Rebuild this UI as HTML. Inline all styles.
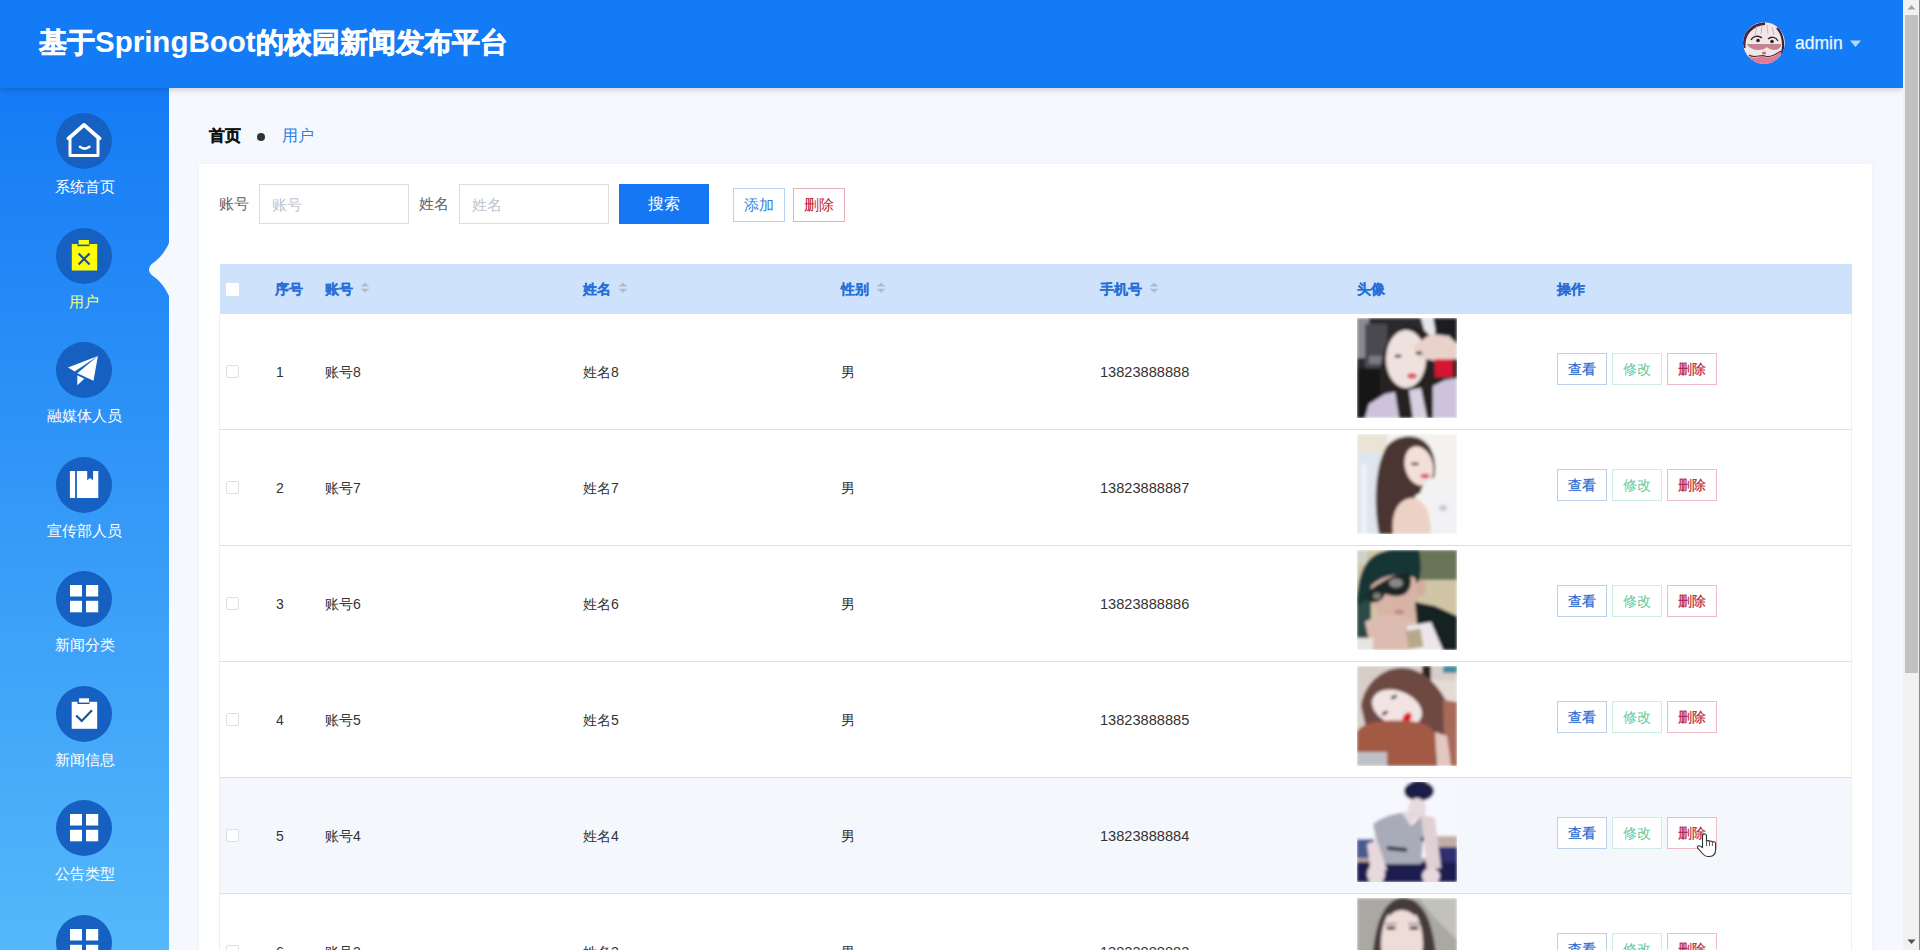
<!DOCTYPE html>
<html><head><meta charset="utf-8">
<style>
*{box-sizing:border-box;margin:0;padding:0}
html,body{width:1920px;height:950px;overflow:hidden;background:#f5f8fd;font-family:"Liberation Sans",sans-serif}
.abs{position:absolute}
#hdr{left:0;top:0;width:1903px;height:88px;background:#137bf5;box-shadow:0 2px 6px rgba(0,0,0,.16);z-index:5}
#title{left:39px;top:22px;color:#fff;font-size:28px;font-weight:bold;white-space:nowrap;line-height:40px}
#title .en{font-size:29.5px}
#title .cj{-webkit-text-stroke:0.6px #fff}
#avatar{left:1743px;top:22px;width:42px;height:42px;border-radius:50%;overflow:hidden}
#uname{left:1795px;top:32px;color:#eaf5ff;font-size:17.5px;line-height:22px;-webkit-text-stroke:0.25px #eaf5ff}
#caret{left:1850px;top:40px}
#side{left:0;top:88px;width:169px;height:862px;background:linear-gradient(#157bf5,#54b8fa);z-index:2}
.mi{position:absolute;left:0;width:169px;height:115px}
.mi .c{position:absolute;left:56px;top:0;width:56px;height:56px;border-radius:50%;background:#1560c1}
.mi .c svg{position:absolute;left:0;top:0}
.mi .l{position:absolute;left:0;top:65px;width:169px;text-align:center;color:#fff;font-size:15px;line-height:18px;white-space:nowrap}
.mi.act .l{color:#eeff80;left:-1px}
#notch{left:149px;top:243px;z-index:3}
#sb{left:1903px;top:0;width:17px;height:950px;background:#f1f1f1;z-index:6}
#sb .th{position:absolute;left:2px;top:15px;width:13px;height:658px;background:#c1c1c1}
#sb .edge{position:absolute;right:0;top:0;width:1px;height:950px;background:#8a8a8a}
#bc{left:209px;top:126px;font-size:16px;line-height:20px;white-space:nowrap}
#bc .h{color:#111;font-weight:bold;-webkit-text-stroke:0.3px #111}
#bc .dot{position:absolute;left:48px;top:7px;width:8px;height:8px;border-radius:50%;background:#333}
#bc .u{position:absolute;left:73px;top:0;color:#2f7fe6;font-size:15.5px}
#card{left:199px;top:164px;width:1673px;height:800px;background:#fff;box-shadow:0 0 4px rgba(220,228,240,.35)}
.lab{position:absolute;top:195px;font-size:15px;color:#606266;line-height:18px}
.inp{position:absolute;top:184px;width:150px;height:40px;border:1px solid #dddddd;background:#fff}
.inp span{position:absolute;left:12px;top:11px;font-size:15px;color:#c0c4cc;line-height:18px}
#sbtn{left:619px;top:184px;width:90px;height:40px;background:#1677f4;color:#fff;font-size:16px;line-height:40px;text-align:center}
.obtn{position:absolute;top:188px;width:52px;height:34px;border:1px solid #b3d3f5;background:#fff;font-size:15px;line-height:32px;text-align:center}
#tbl{left:220px;top:264px;width:1632px;height:700px}
#thead{left:0;top:0;width:1632px;height:50px;background:#cee3fb}
#thead .th{position:absolute;top:16px;font-size:14px;font-weight:bold;color:#2a71d8;line-height:18px;white-space:nowrap}
#thead .th .cj{-webkit-text-stroke:0.2px #2a6fd6}
.srt{position:absolute;top:2px}
.hcb{position:absolute;left:6px;top:19px;width:13px;height:13px;background:#fff;border-radius:1px}
#tl{left:219px;top:314px;width:1px;height:640px;background:#eceef2}
#tr{left:1851px;top:314px;width:1px;height:640px;background:#eef0f4;z-index:1}
.row{position:absolute;left:220px;width:1632px;height:116px;border-bottom:1px solid #d5e0ec;background:#fff}
.row.hov{background:#f4f7fc}
.row .cb{position:absolute;left:6px;top:51px;width:13px;height:13px;border:1px solid #dcdfe6;background:#fff;border-radius:2px}
.row .t{position:absolute;top:49px;font-size:14px;color:#333;line-height:18px;white-space:nowrap}
.row .ph{position:absolute;left:1137px;top:4px;width:100px;height:100px;overflow:hidden}
.btn{position:absolute;top:39px;width:50px;height:32px;border:1px solid;background:#fff;font-size:14px;line-height:30px;text-align:center}
.b1{left:1337px;color:#2468d0;border-color:#bcd0ec;-webkit-text-stroke:0.2px #2468d0}
.b2{left:1392px;color:#62c89a;border-color:#cbeedf}
.b3{left:1447px;color:#b81c3a;border-color:#ebbcc4;-webkit-text-stroke:0.2px #b81c3a}
.hov .btn{background:#fff}
#cursor{left:1696px;top:833px;z-index:8}
</style></head><body>
<div id="hdr" class="abs">
  <div id="title" class="abs"><span class="cj">基于</span><span class="en">SpringBoot</span><span class="cj">的校园新闻发布平台</span></div>
  <div id="avatar" class="abs"><svg width="42" height="42" viewBox="0 0 42 42"><defs><clipPath id="av"><circle cx="21" cy="21" r="21"/></clipPath><filter id="avb"><feGaussianBlur stdDeviation="0.5"/></filter></defs><g clip-path="url(#av)"><rect width="42" height="42" fill="#f3e6e8"/><g filter="url(#avb)">
<path d="M1,26 C0,12 8,3 22,1.5" fill="none" stroke="#4a2838" stroke-width="3"/>
<path d="M34,6 C40,12 42,24 38,34" fill="none" stroke="#3a2432" stroke-width="2.2"/>
<path d="M14,4 L12,14 M19,3 L18,12 M24,3 L25,12 M29,5 L31,13" stroke="#c9b6c0" stroke-width="1"/>
<path d="M8,18 C10,14 16,13 19,16 M25,17 C28,14 33,15 35,19" fill="none" stroke="#3a2a30" stroke-width="1.3"/>
<circle cx="15" cy="18.5" r="1.8" fill="#2a2028"/><circle cx="29" cy="19.5" r="1.8" fill="#2a2028"/>
<path d="M4,22 H38 V24 C36,29 28,29 24,25 C20,29 10,29 5,24 Z" fill="#c48590"/>
<path d="M6,34 C12,38 18,33 22,35 C26,37 32,34 38,30 L40,42 H4 Z" fill="#e07a98"/>
<path d="M6,33 C12,37 18,32 22,34 C26,36 32,33 38,29" fill="none" stroke="#4a2838" stroke-width="1.2"/>
<ellipse cx="21" cy="31" rx="2.2" ry="1.5" fill="#d06a84"/>
</g></g></svg></div>
  <div id="uname" class="abs">admin</div>
  <svg id="caret" class="abs" width="11" height="8" viewBox="0 0 11 8"><path d="M0,0.5 H11 L5.5,7 Z" fill="#b6d6fc"/></svg>
</div>
<div id="side" class="abs">
<div class="mi" style="top:25px"><div class="c"><svg width="56" height="56" viewBox="0 0 56 56"><path d="M14,42.5 V25 L28,12.5 L42,25 V42.5 Z" fill="none" stroke="#fff" stroke-width="3" stroke-linejoin="round"/><path d="M12,25.5 L28,11.5 L44,25.5" fill="none" stroke="#fff" stroke-width="3" stroke-linecap="round" stroke-linejoin="round"/><path d="M24,33.8 Q28.7,37.5 33.4,33.8" fill="none" stroke="#fff" stroke-width="2.6" stroke-linecap="round"/></svg></div><div class="l">系统首页</div></div>
<div class="mi act" style="top:140px"><div class="c"><svg width="56" height="56" viewBox="0 0 56 56"><rect x="15.8" y="16" width="25.4" height="26.5" fill="#ffff00"/><rect x="21.5" y="16" width="12" height="2.2" fill="#1a55a8"/><rect x="22.7" y="12" width="10.3" height="4.6" fill="#ffff00"/><path d="M22.6,25.4 L33.6,36.4 M33.6,25.4 L22.6,36.4" stroke="#1d4f97" stroke-width="2.1"/></svg></div><div class="l">用户</div></div>
<div class="mi" style="top:254px"><div class="c"><svg width="56" height="56" viewBox="0 0 56 56"><path d="M12,25.4 L41.9,14 L18.7,29.6 Z" fill="#fff"/><path d="M21.3,31.2 L41.9,14 L37.5,38.7 Z" fill="#fff"/><path d="M21.3,33.2 L28.3,36.8 L21.3,43.2 Z" fill="#fff"/></svg></div><div class="l">融媒体人员</div></div>
<div class="mi" style="top:369px"><div class="c"><svg width="56" height="56" viewBox="0 0 56 56"><rect x="13.9" y="14" width="5.2" height="27" fill="#fff"/><path d="M20.9,14 H31.2 V23.2 L34.1,21 L37.1,23.2 V14 H42.3 V41 H20.9 Z" fill="#fff"/></svg></div><div class="l">宣传部人员</div></div>
<div class="mi" style="top:483px"><div class="c"><svg width="56" height="56" viewBox="0 0 56 56"><rect x="14" y="14" width="12" height="11.5" fill="#fff"/><rect x="30" y="14" width="12.2" height="11.5" fill="#fff"/><rect x="14" y="29.8" width="12" height="11.5" fill="#fff"/><rect x="30" y="29.8" width="12.2" height="11.5" fill="#fff"/></svg></div><div class="l">新闻分类</div></div>
<div class="mi" style="top:598px"><div class="c"><svg width="56" height="56" viewBox="0 0 56 56"><rect x="15.7" y="15.8" width="25.5" height="27" fill="#fff"/><rect x="21.5" y="15.8" width="12" height="2.2" fill="#1a55a8"/><rect x="23.1" y="12.3" width="9.9" height="4.3" fill="#fff"/><path d="M20.2,29.5 L25.7,35 L36,24.3" fill="none" stroke="#1d4f97" stroke-width="2.1"/></svg></div><div class="l">新闻信息</div></div>
<div class="mi" style="top:712px"><div class="c"><svg width="56" height="56" viewBox="0 0 56 56"><rect x="14" y="14" width="12" height="11.5" fill="#fff"/><rect x="30" y="14" width="12.2" height="11.5" fill="#fff"/><rect x="14" y="29.8" width="12" height="11.5" fill="#fff"/><rect x="30" y="29.8" width="12.2" height="11.5" fill="#fff"/></svg></div><div class="l">公告类型</div></div>
<div class="mi" style="top:827px"><div class="c"><svg width="56" height="56" viewBox="0 0 56 56"><rect x="14" y="14" width="12" height="11.5" fill="#fff"/><rect x="30" y="14" width="12.2" height="11.5" fill="#fff"/><rect x="14" y="29.8" width="12" height="11.5" fill="#fff"/><rect x="30" y="29.8" width="12.2" height="11.5" fill="#fff"/></svg></div><div class="l">新闻</div></div>
</div>
<svg id="notch" class="abs" width="20" height="53" viewBox="0 0 20 53"><path d="M20,0 C16,9 10,16 4,20 Q0,23 0,26.5 Q0,30 4,33 C10,37 16,44 20,53 Z" fill="#f5f8fd"/></svg>
<div id="bc" class="abs"><span class="h">首页</span><span class="dot"></span><span class="u">用户</span></div>
<div id="card" class="abs"></div>
<div class="lab" style="left:219px">账号</div>
<div class="inp" style="left:259px"><span>账号</span></div>
<div class="lab" style="left:419px">姓名</div>
<div class="inp" style="left:459px"><span>姓名</span></div>
<div id="sbtn" class="abs">搜索</div>
<div class="obtn" style="left:733px;color:#2f7fd8;border-color:#b5d3f3">添加</div>
<div class="obtn" style="left:793px;color:#c0202c;border-color:#eab0b8">删除</div>
<div id="tl" class="abs"></div><div id="tr" class="abs"></div>
<div id="tbl" class="abs">
<div id="thead" class="abs">
<div class="hcb"></div>
<div class="th" style="left:55px"><span class="cj">序号</span></div>
<div class="th" style="left:105px"><span class="cj">账号</span><svg class="srt" style="left:35px" width="10" height="12" viewBox="0 0 10 12"><path d="M0.5,4.5 L5,0.5 L9.5,4.5 Z M0.5,6.7 L9.5,6.7 L5,10.8 Z" fill="#b4bcc8"/></svg></div>
<div class="th" style="left:363px"><span class="cj">姓名</span><svg class="srt" style="left:35px" width="10" height="12" viewBox="0 0 10 12"><path d="M0.5,4.5 L5,0.5 L9.5,4.5 Z M0.5,6.7 L9.5,6.7 L5,10.8 Z" fill="#b4bcc8"/></svg></div>
<div class="th" style="left:621px"><span class="cj">性别</span><svg class="srt" style="left:35px" width="10" height="12" viewBox="0 0 10 12"><path d="M0.5,4.5 L5,0.5 L9.5,4.5 Z M0.5,6.7 L9.5,6.7 L5,10.8 Z" fill="#b4bcc8"/></svg></div>
<div class="th" style="left:880px"><span class="cj">手机号</span><svg class="srt" style="left:49px" width="10" height="12" viewBox="0 0 10 12"><path d="M0.5,4.5 L5,0.5 L9.5,4.5 Z M0.5,6.7 L9.5,6.7 L5,10.8 Z" fill="#b4bcc8"/></svg></div>
<div class="th" style="left:1137px"><span class="cj">头像</span></div>
<div class="th" style="left:1337px"><span class="cj">操作</span></div>
</div>
</div>
<div class="abs" style="left:0;top:0"><div class="row" style="top:314px">
<div class="cb"></div>
<div class="t" style="left:56px">1</div>
<div class="t" style="left:105px">账号8</div>
<div class="t" style="left:363px">姓名8</div>
<div class="t" style="left:621px">男</div>
<div class="t" style="left:880px;font-size:14.6px">13823888888</div>
<div class="ph"><svg width="100" height="100" viewBox="0 0 100 100"><defs><filter id="bl1" x="-10%" y="-10%" width="120%" height="120%"><feGaussianBlur stdDeviation="1.6"/></filter></defs><g filter="url(#bl1)"><rect width="100" height="100" fill="#2a2a2e"/>
<rect x="0" y="0" width="12" height="40" fill="#8a8a92"/>
<rect x="8" y="6" width="22" height="45" fill="#4a4a50"/>
<rect x="12" y="38" width="16" height="8" fill="#7a7a84"/>
<rect x="0" y="50" width="30" height="50" fill="#141418"/>
<path d="M64,0 H76 L80,22 L70,22 Z" fill="#e6e6ec"/>
<rect x="78" y="0" width="22" height="40" fill="#1c1c20"/>
<path d="M25,100 C20,60 22,14 48,8 C72,4 84,30 86,62 L80,100 Z" fill="#262024"/>
<ellipse cx="49" cy="41" rx="20" ry="29" fill="#efe2de"/>
<path d="M56,28 L74,16 L92,18 L100,26 V42 L86,44 L62,40 Z" fill="#e8d2ca"/>
<rect x="78" y="41" width="19" height="18" fill="#d41830"/>
<rect x="96" y="41" width="4" height="20" fill="#181818"/>
<path d="M8,100 L12,86 L28,76 L38,74 L42,100 Z" fill="#cdc4dc"/>
<path d="M76,100 L76,68 L88,62 L100,60 V100 Z" fill="#cdc4dc"/>
<path d="M52,72 L64,70 L70,100 H56 Z" fill="#d6d0e0"/>
<ellipse cx="55" cy="58" rx="5" ry="3" fill="#e05565"/>
<ellipse cx="41" cy="38" rx="3.5" ry="1.6" fill="#3a2a2a"/>
<ellipse cx="62" cy="35" rx="3.5" ry="1.6" fill="#3a2a2a"/></g></svg></div>
<div class="btn b1">查看</div><div class="btn b2">修改</div><div class="btn b3">删除</div>
</div></div><div class="abs" style="left:0;top:0"><div class="row" style="top:430px">
<div class="cb"></div>
<div class="t" style="left:56px">2</div>
<div class="t" style="left:105px">账号7</div>
<div class="t" style="left:363px">姓名7</div>
<div class="t" style="left:621px">男</div>
<div class="t" style="left:880px;font-size:14.6px">13823888887</div>
<div class="ph"><svg width="100" height="100" viewBox="0 0 100 100"><defs><filter id="bl2" x="-10%" y="-10%" width="120%" height="120%"><feGaussianBlur stdDeviation="1.6"/></filter></defs><g filter="url(#bl2)"><rect width="100" height="100" fill="#f4f2ee"/>
<rect x="0" y="0" width="30" height="20" fill="#ebe4d4"/>
<rect x="0" y="18" width="24" height="82" fill="#dfe5ee"/>
<rect x="4" y="30" width="6" height="70" fill="#eef2f8"/>
<path d="M22,100 C16,70 18,30 30,12 C40,0 62,-2 72,12 C80,24 80,42 74,52 L58,62 L52,100 Z" fill="#4c3430"/>
<ellipse cx="62" cy="32" rx="14" ry="20" fill="#f2dfd8" transform="rotate(-15 62 32)"/>
<path d="M36,100 C34,80 40,66 54,64 C68,64 74,80 74,100 Z" fill="#ecd2c4"/>
<path d="M64,56 C70,40 90,38 100,52 V100 H78 C76,80 70,66 64,62 Z" fill="#f2f2f4"/>
<ellipse cx="86" cy="74" rx="4" ry="3" fill="#c8c8cc"/>
<ellipse cx="68" cy="42" rx="4.5" ry="2.2" fill="#e04070"/>
<ellipse cx="58" cy="30" rx="4" ry="1.4" fill="#5a4040"/></g></svg></div>
<div class="btn b1">查看</div><div class="btn b2">修改</div><div class="btn b3">删除</div>
</div></div><div class="abs" style="left:0;top:0"><div class="row" style="top:546px">
<div class="cb"></div>
<div class="t" style="left:56px">3</div>
<div class="t" style="left:105px">账号6</div>
<div class="t" style="left:363px">姓名6</div>
<div class="t" style="left:621px">男</div>
<div class="t" style="left:880px;font-size:14.6px">13823888886</div>
<div class="ph"><svg width="100" height="100" viewBox="0 0 100 100"><defs><filter id="bl3" x="-10%" y="-10%" width="120%" height="120%"><feGaussianBlur stdDeviation="1.6"/></filter></defs><g filter="url(#bl3)"><rect width="100" height="100" fill="#d0c6a6"/>
<rect x="56" y="0" width="44" height="30" fill="#6a7458"/>
<rect x="0" y="0" width="10" height="14" fill="#cfd2cc"/>
<rect x="0" y="46" width="14" height="44" fill="#2c4846"/>
<path d="M0,56 C0,20 10,2 35,0 L62,0 C65,15 64,28 60,36 L40,30 C28,28 18,34 10,50 Z" fill="#183636"/>
<path d="M14,36 C26,24 46,22 58,28 C64,44 62,62 56,72 L30,74 C18,62 12,50 14,36 Z" fill="#d8b4a6"/>
<ellipse cx="64" cy="38" rx="5" ry="8" fill="#d2ae9e"/>
<path d="M10,42 C20,34 36,24 52,22 C56,30 54,40 48,44 C40,48 34,46 28,44 C26,50 20,54 12,52 Z" fill="#1c2626"/>
<ellipse cx="39" cy="33" rx="7" ry="4.5" fill="#8a8884"/>
<ellipse cx="20" cy="46" rx="4" ry="3.5" fill="#7a7a76"/>
<path d="M58,52 L78,56 L100,66 V100 H62 Z" fill="#182020"/>
<path d="M8,72 C20,64 42,62 56,70 L60,96 L40,100 H14 Z" fill="#dcbcb0"/>
<path d="M50,76 L74,72 L86,100 H52 Z" fill="#ece6ea"/>
<rect x="0" y="88" width="16" height="12" fill="#e8e4e4"/>
<rect x="50" y="80" width="15" height="18" fill="#b8a888" transform="rotate(-10 57 89)"/>
<ellipse cx="42" cy="62" rx="5" ry="2.5" fill="#c48888"/></g></svg></div>
<div class="btn b1">查看</div><div class="btn b2">修改</div><div class="btn b3">删除</div>
</div></div><div class="abs" style="left:0;top:0"><div class="row" style="top:662px">
<div class="cb"></div>
<div class="t" style="left:56px">4</div>
<div class="t" style="left:105px">账号5</div>
<div class="t" style="left:363px">姓名5</div>
<div class="t" style="left:621px">男</div>
<div class="t" style="left:880px;font-size:14.6px">13823888885</div>
<div class="ph"><svg width="100" height="100" viewBox="0 0 100 100"><defs><filter id="bl4" x="-10%" y="-10%" width="120%" height="120%"><feGaussianBlur stdDeviation="1.6"/></filter></defs><g filter="url(#bl4)"><rect width="100" height="100" fill="#d8cdc8"/>
<rect x="65" y="0" width="9" height="20" fill="#2a2020"/>
<rect x="86" y="0" width="14" height="7" fill="#3a8aa0"/>
<rect x="68" y="14" width="32" height="22" fill="#e4dad6"/>
<path d="M4,40 C8,14 30,0 48,2 C70,4 84,24 92,40 L100,60 V100 H40 L10,66 Z" fill="#6e4a42"/>
<ellipse cx="40" cy="42" rx="26" ry="17" fill="#f2e4e2" transform="rotate(22 40 42)"/>
<ellipse cx="50" cy="52" rx="4" ry="6" fill="#e01818" transform="rotate(30 50 52)"/>
<ellipse cx="37" cy="31" rx="3.5" ry="1.6" fill="#4a3434" transform="rotate(-30 37 31)"/>
<ellipse cx="28" cy="47" rx="3.5" ry="1.6" fill="#4a3434" transform="rotate(-30 28 47)"/>
<path d="M0,66 C4,56 30,52 60,56 C74,58 80,66 80,80 L78,100 H20 L0,88 Z" fill="#a25a44"/>
<path d="M86,34 L100,36 V100 H88 Z" fill="#a86a58"/>
<path d="M78,66 L90,70 L94,100 H80 Z" fill="#e2c8c0"/>
<rect x="0" y="86" width="30" height="14" fill="#bfc0c6"/></g></svg></div>
<div class="btn b1">查看</div><div class="btn b2">修改</div><div class="btn b3">删除</div>
</div></div><div class="abs" style="left:0;top:0"><div class="row hov" style="top:778px">
<div class="cb"></div>
<div class="t" style="left:56px">5</div>
<div class="t" style="left:105px">账号4</div>
<div class="t" style="left:363px">姓名4</div>
<div class="t" style="left:621px">男</div>
<div class="t" style="left:880px;font-size:14.6px">13823888884</div>
<div class="ph"><svg width="100" height="100" viewBox="0 0 100 100"><defs><filter id="bl5" x="-10%" y="-10%" width="120%" height="120%"><feGaussianBlur stdDeviation="1.6"/></filter></defs><g filter="url(#bl5)"><rect width="100" height="100" fill="#f6f8fe"/>
<rect x="0" y="57" width="17" height="24" fill="#4a5a90"/>
<rect x="77" y="54" width="23" height="11" fill="#c4aca6"/>
<rect x="77" y="65" width="23" height="35" fill="#2e2e70"/>
<rect x="0" y="76" width="77" height="4" fill="#b8a0a0"/>
<rect x="0" y="80" width="100" height="20" fill="#1c1e50"/>
<ellipse cx="62" cy="9" rx="15" ry="10" fill="#1c1a48"/>
<ellipse cx="60" cy="27" rx="9" ry="11" fill="#e8dade"/>
<path d="M44,30 L58,30 L55,44 Z" fill="#e6d6da"/>
<path d="M16,42 C24,36 36,31 45,31 L54,44 L64,35 L77,44 L78,58 L66,60 L64,82 H24 Z" fill="#a8acb8"/>
<rect x="64" y="55" width="14" height="4" fill="#1c1e50"/>
<path d="M64,32 L78,36 L84,86 L70,88 Z" fill="#e0d0d4"/>
<path d="M10,62 L20,58 L30,88 L14,92 Z" fill="#e6d8dc"/>
<ellipse cx="19" cy="92" rx="9" ry="10" fill="#e6d8dc"/>
<ellipse cx="74" cy="94" rx="9" ry="8" fill="#e6d8dc"/>
<path d="M30,64 L50,66 L50,70 L30,68 Z" fill="#3a3a4a"/></g></svg></div>
<div class="btn b1">查看</div><div class="btn b2">修改</div><div class="btn b3">删除</div>
</div></div><div class="abs" style="left:0;top:0"><div class="row" style="top:894px">
<div class="cb"></div>
<div class="t" style="left:56px">6</div>
<div class="t" style="left:105px">账号3</div>
<div class="t" style="left:363px">姓名3</div>
<div class="t" style="left:621px">男</div>
<div class="t" style="left:880px;font-size:14.6px">13823888883</div>
<div class="ph"><svg width="100" height="100" viewBox="0 0 100 100"><defs><filter id="bl6" x="-10%" y="-10%" width="120%" height="120%"><feGaussianBlur stdDeviation="1.6"/></filter></defs><g filter="url(#bl6)"><rect width="100" height="100" fill="#a9a8a2"/>
<path d="M62,0 H100 V42 L78,20 Z" fill="#c2c2ba"/>
<path d="M16,100 C12,50 20,0 46,0 C72,0 82,40 80,100 Z" fill="#453b3b"/>
<ellipse cx="45" cy="46" rx="21" ry="40" fill="#eedcd8"/>
<path d="M30,10 C36,2 52,2 60,12 L58,18 C50,10 40,10 32,18 Z" fill="#453b3b"/>
<ellipse cx="34" cy="30" rx="5" ry="1.8" fill="#4a3a3a"/>
<ellipse cx="57" cy="30" rx="5" ry="1.8" fill="#4a3a3a"/>
<rect x="28" y="25" width="12" height="1.2" fill="#6a5a5a"/>
<rect x="51" y="25" width="12" height="1.2" fill="#6a5a5a"/></g></svg></div>
<div class="btn b1">查看</div><div class="btn b2">修改</div><div class="btn b3">删除</div>
</div></div>
<svg id="cursor" class="abs" width="21" height="25" viewBox="0 0 21 25"><path d="M6.5,3 C6.5,1.6 7.3,1 8.5,1 C9.7,1 10.5,1.6 10.5,3 V8.2 C11,7.4 13,7.4 13.5,8.5 C14.1,7.8 15.9,7.9 16.4,9 C17.1,8.4 19.4,8.6 19.6,10.2 V16.5 C19.6,20.5 17.5,23.5 13.5,23.5 H11.5 C9.5,23.5 8.2,22.5 6.9,21 L1.8,15.2 C1.1,14.4 1.5,13 2.7,12.8 C3.9,12.6 5.4,13.6 6.5,14.7 Z" fill="#fff" stroke="#333" stroke-width="1.1" stroke-linejoin="round"/><path d="M10.5,8.2 V13 M13.5,8.5 V13 M16.4,9 V13" stroke="#444" stroke-width="0.9"/></svg>
<div id="sb" class="abs"><svg width="17" height="15" style="position:absolute;left:0;top:0"><path d="M4.5,9.5 L8.5,5 L12.5,9.5 Z" fill="#a3a3a3"/></svg><div class="th"></div><svg width="17" height="15" style="position:absolute;left:0;top:935px"><path d="M4.5,4.5 H12.5 L8.5,9 Z" fill="#505050"/></svg><div class="edge"></div></div>
</body></html>
